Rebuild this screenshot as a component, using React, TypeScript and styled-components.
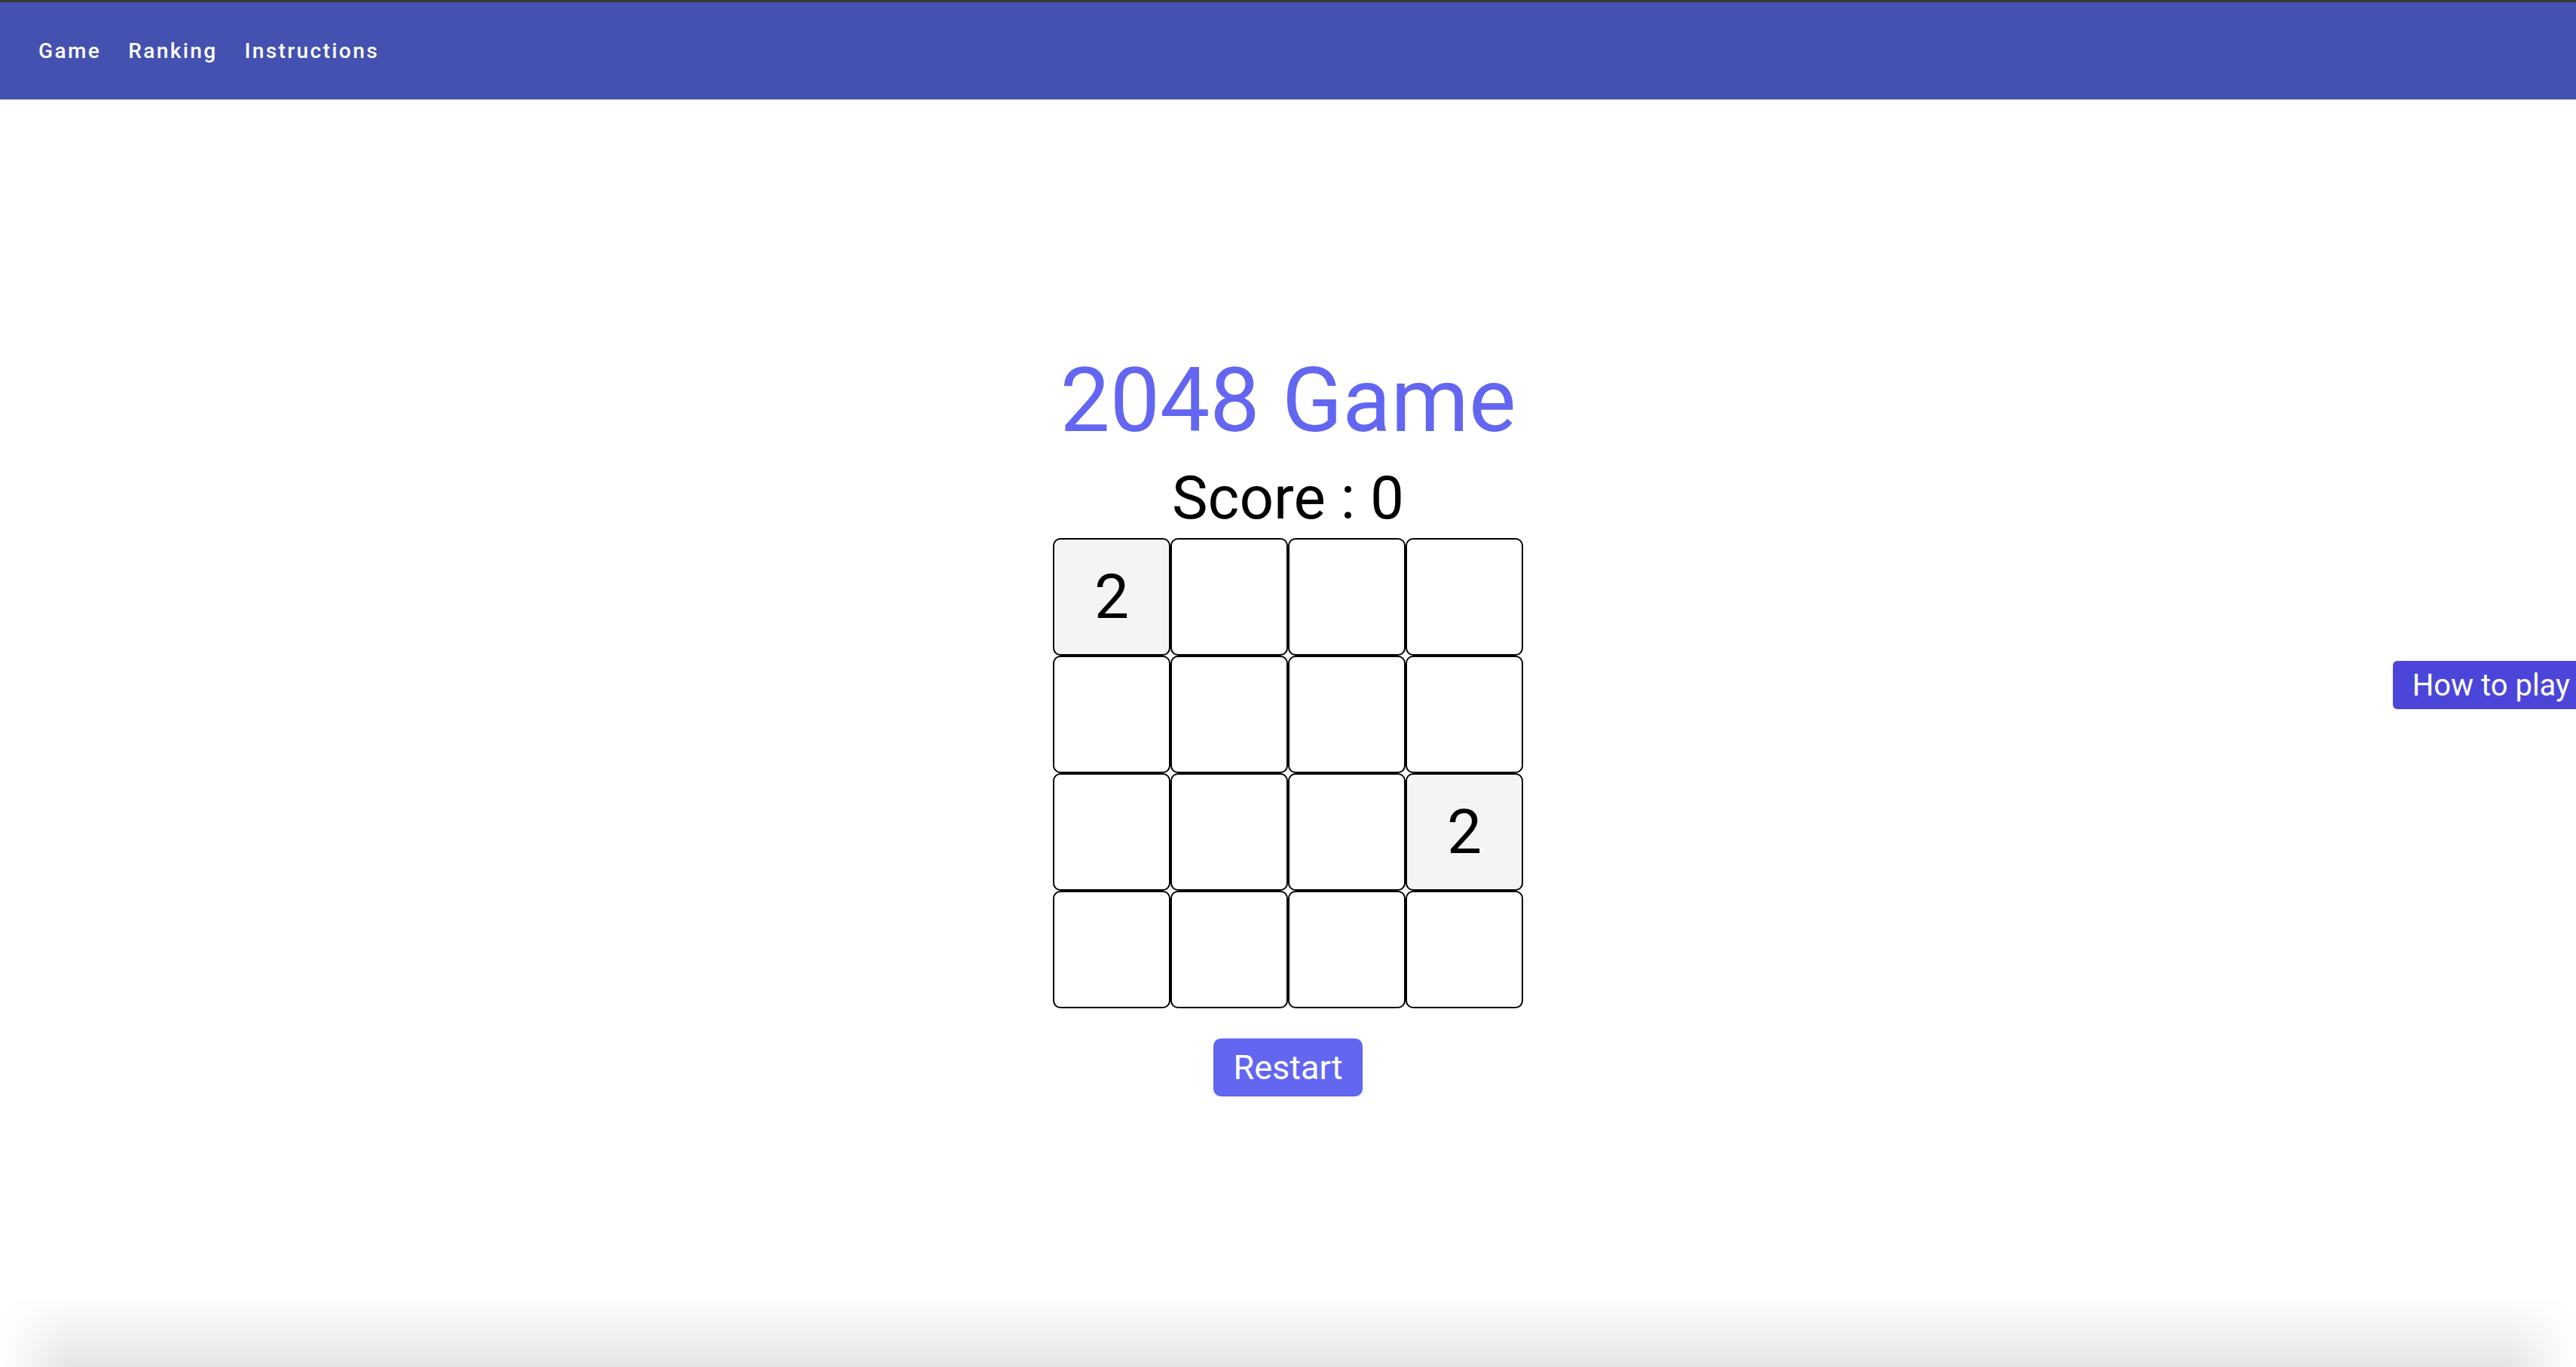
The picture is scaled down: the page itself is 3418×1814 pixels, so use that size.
import styled, { createGlobalStyle } from "styled-components";

const GlobalStyle = createGlobalStyle`
  html, body {
    margin: 0;
    padding: 0;
    background: #ffffff;
    font-family: Roboto, "Liberation Sans", Arial, sans-serif;
    overflow: hidden;
  }
  * {
    box-sizing: border-box;
  }
`;

const Page = styled.div`
  height: 100vh;
  width: 100vw;
  display: flex;
  flex-direction: column;
`;

const AppBar = styled.header`
  height: 132px;
  flex-shrink: 0;
  border-top: 3px solid #383838;
  background-color: #4451b0;
  display: flex;
  align-items: center;
  padding-left: 33px;
`;

const NavButton = styled.button`
  background: none;
  border: none;
  color: #ffffff;
  font-family: Roboto, "Liberation Sans", Arial, sans-serif;
  font-size: 28px;
  font-weight: 500;
  letter-spacing: 2.4px;
  padding: 12px 18px;
  cursor: pointer;
`;

const Main = styled.main`
  flex: 1;
  display: flex;
  flex-direction: column;
  align-items: center;
  padding-top: 341px;
`;

const Title = styled.h1`
  margin: 0;
  font-size: 118px;
  line-height: 1;
  font-weight: 400;
  color: #6366f1;
`;

const Score = styled.h2`
  margin: 30px 0 0;
  font-size: 80px;
  line-height: 1;
  font-weight: 400;
  color: #000000;
`;

const Board = styled.div`
  margin-top: 13px;
  display: grid;
  grid-template-columns: repeat(4, 156px);
  grid-template-rows: repeat(4, 156px);
`;

const Tile = styled.div<{ $filled: boolean }>`
  border: 2.5px solid #000000;
  border-radius: 10px;
  background-color: ${(p) => (p.$filled ? "#f3f4f6" : "#ffffff")};
  display: flex;
  align-items: center;
  justify-content: center;
  font-size: 82px;
  color: #000000;
`;

const RestartButton = styled.button`
  margin-top: 40px;
  height: 77px;
  padding: 0 26px;
  border: none;
  border-radius: 10px;
  background-color: #6366f1;
  color: #ffffff;
  font-family: Roboto, "Liberation Sans", Arial, sans-serif;
  font-size: 45px;
  cursor: pointer;
`;

const HowToPlay = styled.button`
  position: fixed;
  top: 877px;
  right: -20px;
  height: 64px;
  padding: 0 28px 0 26px;
  border: none;
  border-radius: 6px 0 0 6px;
  background-color: #4c45d9;
  color: #ffffff;
  font-family: Roboto, "Liberation Sans", Arial, sans-serif;
  font-size: 40px;
  cursor: pointer;
`;

// window shadow at the bottom edge of the screenshot
const BottomShade = styled.div`
  height: 96px;
  flex-shrink: 0;
  background: linear-gradient(180deg, rgba(0, 0, 0, 0) 0%, rgba(0, 0, 0, 0.1) 100%);
  mask-image: linear-gradient(90deg, transparent 0, #000 90px, #000 calc(100% - 90px), transparent 100%);
`;

const board = [
  [2, 0, 0, 0],
  [0, 0, 0, 0],
  [0, 0, 0, 2],
  [0, 0, 0, 0],
];

function App() {
  return (
    <Page>
      <GlobalStyle />
      <AppBar>
        <NavButton>Game</NavButton>
        <NavButton>Ranking</NavButton>
        <NavButton>Instructions</NavButton>
      </AppBar>
      <Main>
        <Title>2048 Game</Title>
        <Score>Score : 0</Score>
        <Board>
          {board.flat().map((v, i) => (
            <Tile key={i} $filled={v !== 0}>
              {v !== 0 ? v : ""}
            </Tile>
          ))}
        </Board>
        <RestartButton>Restart</RestartButton>
      </Main>
      <BottomShade />
      <HowToPlay>How to play</HowToPlay>
    </Page>
  );
}

export default App;
